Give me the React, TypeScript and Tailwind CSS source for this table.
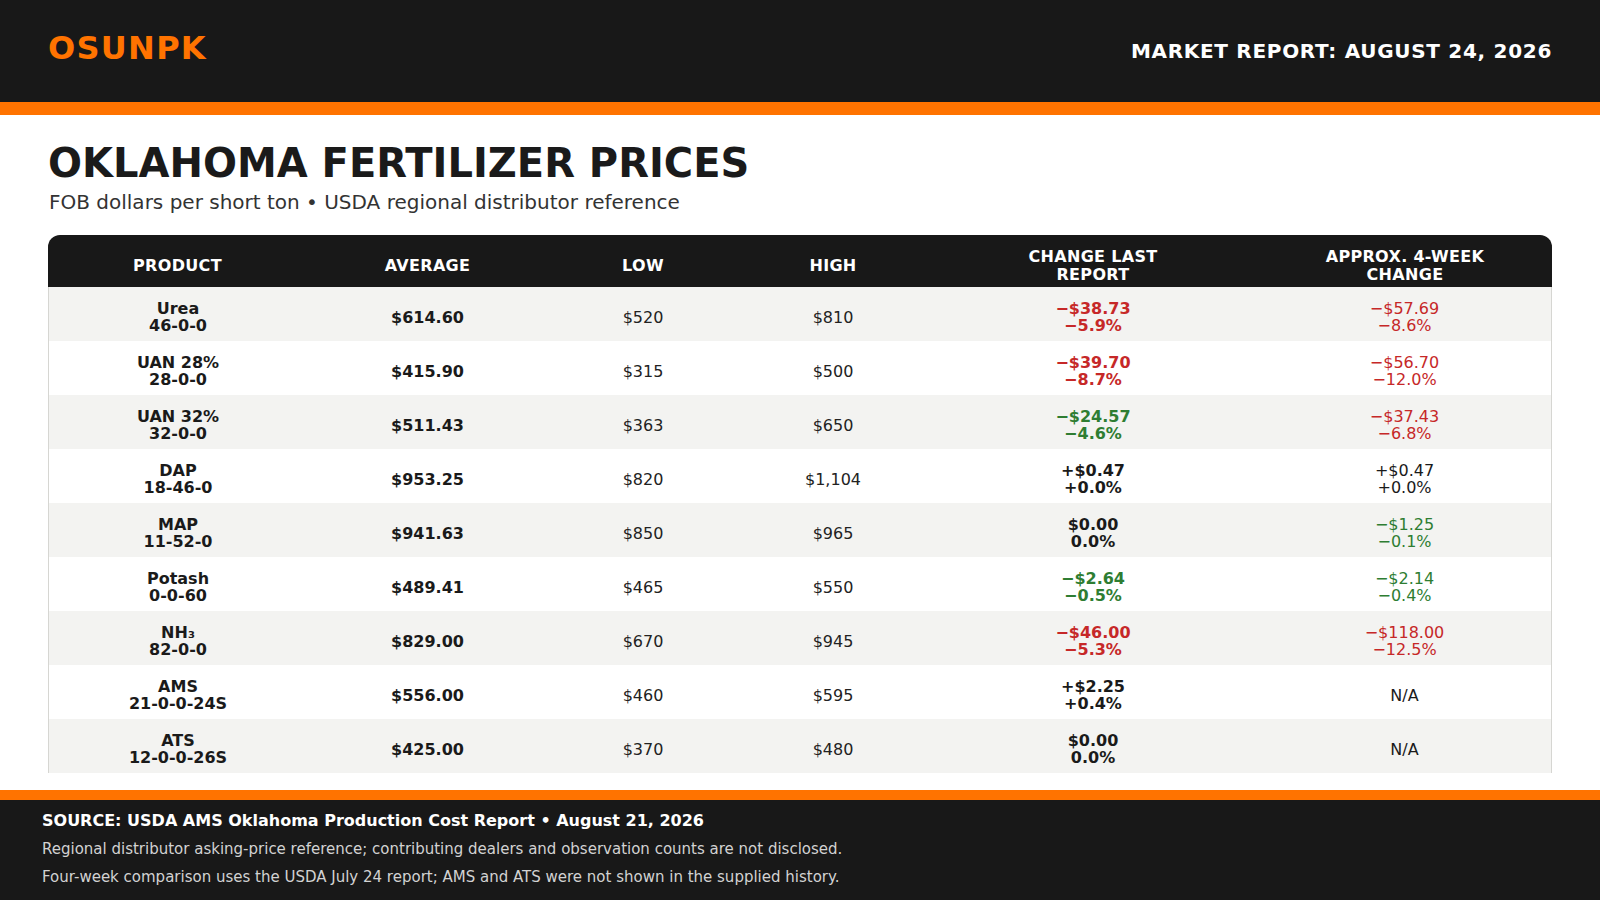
import React from "react";

type Tone = "red" | "green" | "plain";

interface PriceRow {
  name: React.ReactNode;
  grade: string;
  avg: string;
  low: string;
  high: string;
  change: [string, string];
  changeTone: Tone;
  month: [string, string] | null;
  monthTone: Tone;
}

const rows: PriceRow[] = [
  { name: "Urea", grade: "46-0-0", avg: "$614.60", low: "$520", high: "$810", change: ["−$38.73", "−5.9%"], changeTone: "red", month: ["−$57.69", "−8.6%"], monthTone: "red" },
  { name: "UAN 28%", grade: "28-0-0", avg: "$415.90", low: "$315", high: "$500", change: ["−$39.70", "−8.7%"], changeTone: "red", month: ["−$56.70", "−12.0%"], monthTone: "red" },
  { name: "UAN 32%", grade: "32-0-0", avg: "$511.43", low: "$363", high: "$650", change: ["−$24.57", "−4.6%"], changeTone: "green", month: ["−$37.43", "−6.8%"], monthTone: "red" },
  { name: "DAP", grade: "18-46-0", avg: "$953.25", low: "$820", high: "$1,104", change: ["+$0.47", "+0.0%"], changeTone: "plain", month: ["+$0.47", "+0.0%"], monthTone: "plain" },
  { name: "MAP", grade: "11-52-0", avg: "$941.63", low: "$850", high: "$965", change: ["$0.00", "0.0%"], changeTone: "plain", month: ["−$1.25", "−0.1%"], monthTone: "green" },
  { name: "Potash", grade: "0-0-60", avg: "$489.41", low: "$465", high: "$550", change: ["−$2.64", "−0.5%"], changeTone: "green", month: ["−$2.14", "−0.4%"], monthTone: "green" },
  { name: "NH₃", grade: "82-0-0", avg: "$829.00", low: "$670", high: "$945", change: ["−$46.00", "−5.3%"], changeTone: "red", month: ["−$118.00", "−12.5%"], monthTone: "red" },
  { name: "AMS", grade: "21-0-0-24S", avg: "$556.00", low: "$460", high: "$595", change: ["+$2.25", "+0.4%"], changeTone: "plain", month: null, monthTone: "plain" },
  { name: "ATS", grade: "12-0-0-26S", avg: "$425.00", low: "$370", high: "$480", change: ["$0.00", "0.0%"], changeTone: "plain", month: null, monthTone: "plain" },
];

const toneClass = (tone: Tone) => {
  switch (tone) {
    case "red":
      return "text-[#c62828]";
    case "green":
      return "text-[#2e7d32]";
    default:
      return "text-[#1a1a1a]";
  }
};

export default function App() {
  return (
    <div className="w-[1600px] h-[900px] flex flex-col bg-white text-[#1a1a1a] font-['DejaVu_Sans',_'Noto_Sans',_sans-serif]">
      <header className="h-[102px] shrink-0 bg-[#181818] px-12 flex items-center justify-between">
        <div className="mb-[6px] text-[32px] leading-none font-bold tracking-[0.04em] text-[#ff7300]">
          OSUNPK
        </div>
        <div className="text-[20px] leading-none font-bold tracking-[0.035em] text-white">
          MARKET REPORT: AUGUST 24, 2026
        </div>
      </header>
      <div className="h-[13px] shrink-0 bg-[#ff7300]" />

      <main className="flex-1 min-h-0 px-12 pt-6 pb-4 flex flex-col">
        <h1 className="text-[40px] leading-[48px] font-bold text-[#1a1a1a]">
          OKLAHOMA FERTILIZER PRICES
        </h1>
        <p className="mt-[3px] text-[20px] leading-[24px] text-[#333333] pl-px">
          FOB dollars per short ton • USDA regional distributor reference
        </p>

        <table className="mt-[21px] w-full table-fixed border-separate border-spacing-0 text-center">
          <colgroup>
            <col className="w-[259px]" />
            <col className="w-[241px]" />
            <col className="w-[190px]" />
            <col className="w-[190px]" />
            <col className="w-[330px]" />
            <col className="w-[294px]" />
          </colgroup>
          <thead>
            <tr className="text-[16px] leading-[17.5px] font-bold uppercase tracking-[0.02em] text-white">
              <th className="bg-[#181818] rounded-tl-[12px] pt-[13px] pb-[4px] px-2 align-middle">Product</th>
              <th className="bg-[#181818] pt-[13px] pb-[4px] px-2 align-middle">Average</th>
              <th className="bg-[#181818] pt-[13px] pb-[4px] px-2 align-middle">Low</th>
              <th className="bg-[#181818] pt-[13px] pb-[4px] px-2 align-middle">High</th>
              <th className="bg-[#181818] pt-[13px] pb-[4px] px-[80px] align-middle">Change Last Report</th>
              <th className="bg-[#181818] rounded-tr-[12px] pt-[13px] pb-[4px] px-[60px] align-middle">Approx. 4-Week Change</th>
            </tr>
          </thead>
          <tbody className="text-[16px] leading-[17px]">
            {rows.map((row, i) => (
              <tr key={row.grade} className={i % 2 === 0 ? "bg-[#f3f3f1]" : "bg-white"}>
                <td className="pt-[13px] pb-[7px] px-2 font-bold border-l border-[#d6d6d2]">
                  <div>{row.name}</div>
                  <div>{row.grade}</div>
                </td>
                <td className="pt-[13px] pb-[7px] px-2 font-bold">{row.avg}</td>
                <td className="pt-[13px] pb-[7px] px-2 text-[#222222]">{row.low}</td>
                <td className="pt-[13px] pb-[7px] px-2 text-[#222222]">{row.high}</td>
                <td className={`pt-[13px] pb-[7px] px-2 font-bold ${toneClass(row.changeTone)}`}>
                  <div>{row.change[0]}</div>
                  <div>{row.change[1]}</div>
                </td>
                <td className={`pt-[13px] pb-[7px] px-2 border-r border-[#d6d6d2] ${toneClass(row.monthTone)}`}>
                  {row.month ? (
                    <>
                      <div>{row.month[0]}</div>
                      <div>{row.month[1]}</div>
                    </>
                  ) : (
                    "N/A"
                  )}
                </td>
              </tr>
            ))}
          </tbody>
        </table>
      </main>

      <div className="h-[10px] shrink-0 bg-[#ff7300]" />
      <footer className="h-[100px] shrink-0 bg-[#181818] px-[42px] pt-[11px] flex flex-col gap-2">
        <div className="text-[16px] leading-[20px] font-bold text-white">
          SOURCE: USDA AMS Oklahoma Production Cost Report • August 21, 2026
        </div>
        <div className="text-[15px] leading-[20px] text-[#d2d2d2]">
          Regional distributor asking-price reference; contributing dealers and observation counts are not disclosed.
        </div>
        <div className="text-[15px] leading-[20px] text-[#d2d2d2]">
          Four-week comparison uses the USDA July 24 report; AMS and ATS were not shown in the supplied history.
        </div>
      </footer>
    </div>
  );
}
